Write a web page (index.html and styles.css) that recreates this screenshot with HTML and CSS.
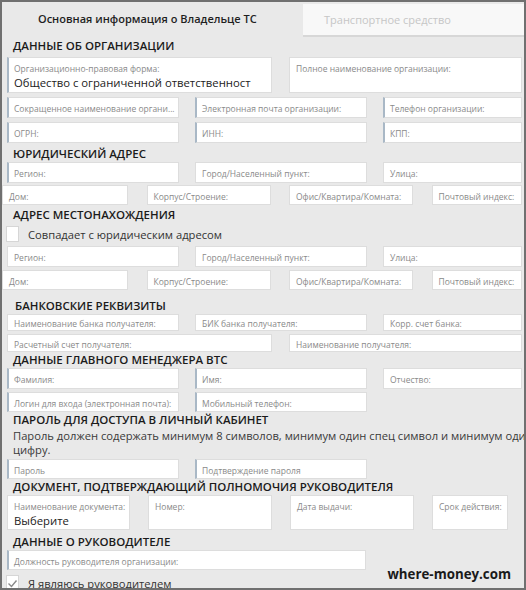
FILE: index.html
```html
<!DOCTYPE html>
<html lang="ru">
<head>
  <meta charset="UTF-8">
  <title>Регистрация владельца ТС</title>
  <link rel="stylesheet" href="styles.css">
</head>
<body>
  <div class="frame">
    <div class="tabs">
      <div class="tab tab-main">Основная информация о Владельце ТС</div>
      <div class="tab tab-other">Транспортное средство</div>
    </div>

    <div class="form">
      <h2 class="sec sec-first">ДАННЫЕ ОБ ОРГАНИЗАЦИИ</h2>
      <div class="row cols-2 tall">
        <div class="field req top">
          <span class="label">Организационно-правовая форма:</span>
          <span class="value">Общество с ограниченной ответственност</span>
        </div>
        <div class="field top"><span class="label">Полное наименование организации:</span></div>
      </div>
      <div class="row cols-3 gap4">
        <div class="field req">Сокращенное наименование органи...</div>
        <div class="field req">Электронная почта организации:</div>
        <div class="field req">Телефон организации:</div>
      </div>
      <div class="row cols-3 gap4">
        <div class="field req">ОГРН:</div>
        <div class="field req">ИНН:</div>
        <div class="field req">КПП:</div>
      </div>

      <h2 class="sec">ЮРИДИЧЕСКИЙ АДРЕС</h2>
      <div class="row cols-3 first">
        <div class="field req">Регион:</div>
        <div class="field">Город/Населенный пункт:</div>
        <div class="field">Улица:</div>
      </div>
      <div class="row cols-4 addr">
        <div class="field">Дом:</div>
        <div class="field">Корпус/Строение:</div>
        <div class="field">Офис/Квартира/Комната:</div>
        <div class="field">Почтовый индекс:</div>
      </div>

      <h2 class="sec sec-loc">АДРЕС МЕСТОНАХОЖДЕНИЯ</h2>
      <label class="check">
        <span class="box"></span>
        <span>Совпадает с юридическим адресом</span>
      </label>
      <div class="row cols-3 gap2">
        <div class="field">Регион:</div>
        <div class="field">Город/Населенный пункт:</div>
        <div class="field">Улица:</div>
      </div>
      <div class="row cols-4 addr addr-low">
        <div class="field">Дом:</div>
        <div class="field">Корпус/Строение:</div>
        <div class="field">Офис/Квартира/Комната:</div>
        <div class="field">Почтовый индекс:</div>
      </div>

      <h2 class="sec sec-bank">БАНКОВСКИЕ РЕКВИЗИТЫ</h2>
      <div class="row cols-3 bank first">
        <div class="field">Наименование банка получателя:</div>
        <div class="field">БИК банка получателя:</div>
        <div class="field">Корр. счет банка:</div>
      </div>
      <div class="row cols-2 bank bank-2">
        <div class="field">Расчетный счет получателя:</div>
        <div class="field">Наименование получателя:</div>
      </div>

      <h2 class="sec sec-tight">ДАННЫЕ ГЛАВНОГО МЕНЕДЖЕРА ВТС</h2>
      <div class="row cols-3 first">
        <div class="field req">Фамилия:</div>
        <div class="field req">Имя:</div>
        <div class="field">Отчество:</div>
      </div>
      <div class="row cols-3 short">
        <div class="field req">Логин для входа (электронная почта):</div>
        <div class="field req">Мобильный телефон:</div>
      </div>

      <h2 class="sec sec-tight">ПАРОЛЬ ДЛЯ ДОСТУПА В ЛИЧНЫЙ КАБИНЕТ</h2>
      <p class="hint"><span class="nowrap">Пароль должен содержать минимум 8 символов, минимум один спец символ и минимум один</span><br>цифру.</p>
      <div class="row cols-3 short">
        <div class="field req">Пароль</div>
        <div class="field req">Подтверждение пароля</div>
      </div>

      <h2 class="sec sec-tight">ДОКУМЕНТ, ПОДТВЕРЖДАЮЩИЙ ПОЛНОМОЧИЯ РУКОВОДИТЕЛЯ</h2>
      <div class="row cols-4 doc first">
        <div class="field top">
          <span class="label">Наименование документа:</span>
          <span class="value">Выберите</span>
        </div>
        <div class="field top"><span class="label">Номер:</span></div>
        <div class="field top"><span class="label">Дата выдачи:</span></div>
        <div class="field top"><span class="label">Срок действия:</span></div>
      </div>

      <h2 class="sec sec-last">ДАННЫЕ О РУКОВОДИТЕЛЕ</h2>
      <div class="row single short first">
        <div class="field req">Должность руководителя организации:</div>
      </div>
      <label class="check check-last">
        <span class="box">
          <svg width="11" height="9" viewBox="0 0 11 9"><polyline points="1.5,4.5 4.5,7.5 9.5,1.5" fill="none" stroke="#8a8a8a" stroke-width="1.4"/></svg>
        </span>
        <span>Я являюсь руководителем</span>
      </label>
    </div>

    <div class="watermark">where-money.com</div>
  </div>
</body>
</html>
```

FILE: styles.css
```css
* {
  box-sizing: border-box;
}
body {
  margin: 0;
  font-family: "Open Sans", "Noto Sans", sans-serif;
}
.frame {
  position: relative;
  width: 526px;
  height: 590px;
  border: 2px solid #707070;
  background-color: #e9e9e9;
  overflow: hidden;
}

/* вкладки */
.tabs {
  display: flex;
  height: 35px;
}
.tab {
  font-size: 11px;
  line-height: 34px;
  white-space: nowrap;
}
.tab-main {
  width: 301px;
  padding-left: 36px;
  color: #1f1f1f;
  font-weight: 600;
}
.tab-other {
  flex: 1;
  margin-top: 2px;
  padding-left: 21px;
  line-height: 31px;
  background-color: #f8f8f8;
  border-bottom: 2px solid #d7d7d7;
  color: #c6c6c6;
}

/* форма */
.form {
  padding: 0 2px 0 5px;
}
.sec {
  margin: 3px 0 0 6px;
  font-size: 11.5px;
  line-height: 16px;
  font-weight: 600;
  color: #1b1b1b;
}
.sec-first {
  margin-top: 1px;
}
.sec-loc {
  margin-top: 2px;
}
.sec-bank {
  margin-top: 8px;
  margin-left: 8px;
}
.sec-tight {
  margin-top: 0;
}
.sec-last {
  margin-top: 4px;
}

.row {
  display: grid;
  column-gap: 16px;
  height: 21px;
  margin-top: 3px;
}
.row.first {
  margin-top: 0;
}
.row.gap4 {
  margin-top: 4px;
}
.row.gap2 {
  margin-top: 2px;
}
.cols-2 {
  grid-template-columns: 265px 1fr;
  column-gap: 17px;
}
.cols-3 {
  grid-template-columns: 172px 172px 1fr;
}
.cols-4 {
  grid-template-columns: 124px 124px 124px 1fr;
  column-gap: 18px;
}
.cols-4.addr {
  height: 20px;
  margin-top: 2px;
  margin-left: -5px;
  grid-template-columns: 126px 124px 124px 1fr;
  column-gap: 18.5px;
}
.cols-4.addr-low {
  margin-top: 3px;
}
.cols-4.doc {
  grid-template-columns: 123px 124px 124px 76px;
  height: 35px;
}
.single {
  grid-template-columns: 359px;
}
.tall {
  height: 36px;
}
.short {
  height: 20px;
}
.bank {
  height: 17px;
}
.bank-2 {
  height: 18px;
}

.field {
  display: flex;
  align-items: center;
  padding: 2px 6px 0 6px;
  background-color: #fff;
  border: 1px solid #dddddd;
  font-size: 8.5px;
  color: #8a8a8a;
  white-space: nowrap;
  overflow: hidden;
}
.field.req {
  border-left: 2px solid #a9b8c6;
  padding-left: 5px;
}
.field.top {
  flex-direction: column;
  align-items: flex-start;
  justify-content: flex-start;
  padding-top: 5px;
}
.bank .field {
  align-items: flex-end;
  padding-bottom: 1px;
}
.label {
  line-height: 11px;
}
.value {
  margin-top: 1px;
  font-size: 11.3px;
  line-height: 15px;
  color: #222;
}

/* чекбоксы */
.check {
  display: flex;
  align-items: center;
  height: 20px;
  margin-top: 1px;
  font-size: 11.2px;
  color: #333;
}
.check-last {
  margin-top: 3px;
}
.box {
  display: flex;
  align-items: center;
  justify-content: center;
  width: 13px;
  height: 16px;
  margin-left: -1px;
  margin-right: 9px;
  background-color: #fff;
  border: 1px solid #d6d6d6;
}

.hint {
  margin: 1px 0 0 6px;
  font-size: 11.2px;
  line-height: 13.5px;
  color: #3a3a3a;
}
.nowrap {
  white-space: nowrap;
}

.watermark {
  position: absolute;
  right: 13px;
  bottom: 5px;
  font-size: 13.3px;
  font-weight: 700;
  color: #1a1a1a;
}
```
